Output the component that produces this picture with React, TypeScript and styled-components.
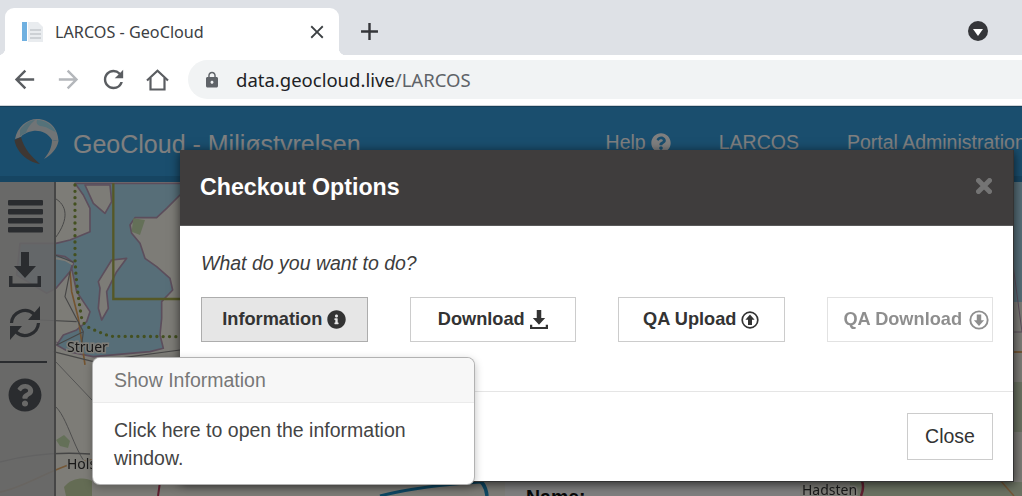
import React from "react";
import styled, { createGlobalStyle } from "styled-components";
import { FaInfoCircle, FaQuestionCircle } from "react-icons/fa";
import {
  MdAdd,
  MdArrowBack,
  MdArrowForward,
  MdClose,
  MdLock,
  MdRefresh,
} from "react-icons/md";

const GlobalStyle = createGlobalStyle`
  html, body {
    margin: 0;
    padding: 0;
    overflow: hidden;
    background: #fff;
  }
  * {
    box-sizing: border-box;
  }
`;

const Page = styled.div`
  width: 1022px;
  height: 496px;
  display: flex;
  flex-direction: column;
  font-family: "Liberation Sans", Arial, sans-serif;
  overflow: hidden;
`;

/* browser chrome */
const TabStrip = styled.div`
  height: 55px;
  flex: none;
  background: #dee1e6;
  display: flex;
  align-items: flex-end;
  padding-left: 5px;
  padding-right: 34px;
`;

const Tab = styled.div`
  position: relative;
  width: 334px;
  height: 47px;
  background: #fff;
  border-radius: 9px 9px 0 0;
  display: flex;
  align-items: center;
  padding: 0 11px 0 17px;
  gap: 11px;

  &::before,
  &::after {
    content: "";
    position: absolute;
    bottom: 0;
    width: 7px;
    height: 7px;
  }
  &::before {
    left: -7px;
    background: radial-gradient(circle at 0 0, transparent 7px, #fff 7.5px);
  }
  &::after {
    right: -7px;
    background: radial-gradient(circle at 100% 0, transparent 7px, #fff 7.5px);
  }
`;

const TabTitle = styled.span`
  flex: 1;
  font-family: "Noto Sans", sans-serif;
  font-size: 16.2px;
  color: #3c4043;
  white-space: nowrap;
`;

const NewTab = styled.div`
  margin-left: 16px;
  height: 47px;
  display: flex;
  align-items: center;
  color: #35363a;
`;

const ProfileDot = styled.div`
  margin-left: auto;
  margin-bottom: 14px;
  width: 20px;
  height: 20px;
  border-radius: 50%;
  background: #35363a;
  display: flex;
  align-items: center;
  justify-content: center;

  &::after {
    content: "";
    margin-top: 2px;
    border-left: 5px solid transparent;
    border-right: 5px solid transparent;
    border-top: 7px solid #fff;
  }
`;

const Toolbar = styled.div`
  height: 51px;
  flex: none;
  background: #fff;
  border-bottom: 1px solid #cfd3d8;
  display: flex;
  align-items: flex-start;
  padding: 5px 0 0 2px;
`;

const NavButton = styled.div<{ $faded?: boolean }>`
  width: 44.5px;
  height: 39px;
  display: flex;
  align-items: center;
  justify-content: center;
  color: ${(p) => (p.$faded ? "#b4b7bb" : "#5a5d61")};
`;

const Omnibox = styled.div`
  flex: 1;
  height: 39px;
  margin-left: 8px;
  background: #f1f3f4;
  border-radius: 20px 0 0 20px;
  display: flex;
  align-items: center;
  padding-left: 15px;
  gap: 15px;
  color: #5f6368;
`;

const UrlText = styled.span`
  font-family: "Noto Sans", sans-serif;
  font-size: 18.5px;
  color: #5f6368;
  white-space: nowrap;

  b {
    font-weight: 400;
    color: #202124;
  }
`;

/* the portal behind the dialog */
const AppArea = styled.div`
  position: relative;
  flex: 1;
  display: flex;
  flex-direction: column;
  overflow: hidden;
`;

const Header = styled.header`
  height: 76px;
  flex: none;
  background: #349cdc;
  border-top: 1px solid #2a7cb0;
  border-bottom: 6px solid #2d8ac4;
  display: flex;
  align-items: center;
  padding: 0 0 0 14px;
  color: #fff;
  overflow: hidden;
`;

const LogoMark = styled.svg`
  flex: none;
`;

const Brand = styled.div`
  font-size: 25px;
  margin-left: 13px;
  margin-top: 5px;
  white-space: nowrap;
`;

const HeaderNav = styled.nav`
  margin-left: 245px;
  margin-top: 2px;
  display: flex;
  align-items: center;
  gap: 48px;
  font-size: 19.5px;
  white-space: nowrap;
`;

const NavItem = styled.span`
  display: flex;
  align-items: center;
  gap: 5px;
`;

const Workspace = styled.div`
  position: relative;
  flex: 1;
  display: flex;
`;

const MapCanvas = styled.svg`
  position: absolute;
  inset: 0;
  filter: blur(0.7px);
`;

const MapLabel = styled.text`
  font-family: "Noto Sans", sans-serif;
  font-size: 14px;
  fill: #333;
  stroke: #fbf9ee;
  stroke-width: 3px;
  paint-order: stroke;
`;

const Sidebar = styled.aside`
  position: relative;
  width: 56px;
  background: rgba(205, 205, 205, 0.88);
  border-right: 2px solid #8c8c8c;
  padding-top: 17px;
  display: flex;
  flex-direction: column;
  color: #55585e;
`;

const SideButton = styled.div`
  width: 50px;
  height: 35px;
  margin-bottom: 18px;
  display: flex;
  align-items: center;
  justify-content: center;
`;

const SideDivider = styled.hr`
  width: 47px;
  height: 2px;
  margin: 3px 0 14px;
  border: 0;
  background: #55585e;
`;

const InfoPanel = styled.div`
  position: absolute;
  left: 505px;
  top: 299px;
  width: 295px;
  height: 40px;
  background: #fff;
  padding: 5px 0 0 21px;
  font-size: 19.5px;
  font-weight: 700;
  color: #111;
`;

/* dialog */
const Backdrop = styled.div`
  position: absolute;
  inset: 0;
  background: rgba(0, 0, 0, 0.5);
  padding: 44px 8px 0 180px;
`;

const Modal = styled.div`
  background: #fff;
  box-shadow: 0 2px 10px rgba(0, 0, 0, 0.65);
  border-right: 1px solid #333;
  border-bottom: 1px solid #333;
`;

const ModalHeader = styled.div`
  height: 76px;
  background: #3f3d3d;
  border-bottom: 1px solid #5a5a5a;
  display: flex;
  align-items: center;
  justify-content: space-between;
  padding: 0 21px 0 20px;
`;

const ModalTitle = styled.h4`
  margin: 0;
  font-size: 23.2px;
  font-weight: 700;
  color: #fff;
`;

const DismissIcon = styled.svg`
  margin-bottom: 4px;
  color: #747474;
`;

const ModalBody = styled.div`
  height: 165px;
  padding: 26px 20px 0 21px;
`;

const Prompt = styled.p`
  margin: 0 0 22px;
  font-size: 19.5px;
  line-height: 23px;
  font-style: italic;
  color: #3c3c3c;
`;

const ActionRow = styled.div`
  display: grid;
  grid-template-columns: repeat(4, 1fr);
  gap: 42px;
`;

const ActionButton = styled.button<{ $active?: boolean }>`
  height: 45px;
  padding: 0;
  display: flex;
  align-items: center;
  justify-content: center;
  gap: 5px;
  font-family: inherit;
  font-size: 18.2px;
  font-weight: 700;
  color: #333;
  background: ${(p) => (p.$active ? "#e6e6e6" : "#fff")};
  border: 1.5px solid ${(p) => (p.$active ? "#adadad" : "#ccc")};

  &:disabled {
    opacity: 0.55;
    padding-left: 13px;
    gap: 7px;
    color: #333;
  }
`;

const ModalFooter = styled.div`
  height: 90px;
  border-top: 1px solid #e5e5e5;
  display: flex;
  align-items: flex-start;
  justify-content: flex-end;
  padding: 21px 20px 0 0;
`;

const CloseButton = styled.button`
  width: 86px;
  height: 47px;
  padding: 0;
  font-family: inherit;
  font-size: 19.5px;
  color: #333;
  background: #fff;
  border: 1px solid #ccc;
`;

const Popover = styled.div`
  position: absolute;
  left: 92px;
  top: 251px;
  width: 383px;
  height: 128px;
  background: #fff;
  border: 1px solid rgba(0, 0, 0, 0.3);
  border-radius: 8px;
  box-shadow: 0 3px 8px rgba(0, 0, 0, 0.25);
  overflow: hidden;
  font-size: 19.5px;
`;

const PopoverTitle = styled.div`
  height: 45px;
  background: #f7f7f7;
  border-bottom: 1px solid #ebebeb;
  padding: 0 21px;
  display: flex;
  align-items: center;
  color: #777;
`;

const PopoverText = styled.div`
  padding: 13px 21px 0;
  line-height: 28px;
  color: #444;
`;

function Favicon() {
  return (
    <svg width="22" height="22" viewBox="0 0 22 22">
      <rect x="0" y="1" width="5" height="19" fill="#6fb0e0" />
      <path d="M6 1h10l5 5v15H6z" fill="#e9ecef" />
      <path d="M8 9h11M8 13h11M8 17h11" stroke="#c3c8cd" strokeWidth="1.4" />
    </svg>
  );
}

function HomeIcon() {
  return (
    <svg width="23" height="22" viewBox="0 0 23 22" fill="none" stroke="currentColor" strokeWidth="2.2">
      <path d="M1 11.5 11.5 1.8 22 11.5" />
      <path d="M4.5 9v11.5h14V9" />
    </svg>
  );
}

function GeoLogo() {
  return (
    <LogoMark width="46" height="46" viewBox="14 120 46 46">
      <path
        d="M15 140C17 128 27 120 37 120C50 120 58 130 58.5 142L52 141C48 134 40 131 33 132C27 133 22 136 21 138Z"
        fill="#e0e8ec"
      />
      <path
        d="M37 121C46 121 52 126 56 133C50 131 46 127 40 127C37 126 36 124 37 121Z"
        fill="#a8e4f4"
      />
      <path
        d="M20 131C24 125 30 121 35 121C30 125 27 130 26 134C23 135 21 136 20 138Z"
        fill="#a8dcec"
      />
      <path d="M14.5 141C16 152 27 163 40 165C32 158 24 150 21 138Z" fill="#7c6e66" />
      <path d="M44 160C51 156 57 150 58.5 142L52 141C52 148 49 154 44 160Z" fill="#e0e4e4" />
    </LogoMark>
  );
}

function BarsIcon() {
  return (
    <svg width="35" height="33" viewBox="0 0 35 33" fill="currentColor">
      <rect y="0" width="35" height="5.5" rx="1" />
      <rect y="9" width="35" height="5.5" rx="1" />
      <rect y="18" width="35" height="5.5" rx="1" />
      <rect y="27" width="35" height="5.5" rx="1" />
    </svg>
  );
}

function TrayDownIcon({ size, heavy }: { size: number; heavy?: boolean }) {
  return (
    <svg width={size} height={(size * 35) / 32} viewBox="0 0 32 35" fill="currentColor">
      <path d="M12 0h8v14h7L16 26 5 14h7z" />
      <path d={heavy ? "M0 26h4v4h24v-4h4v9H0z" : "M0 24h3.5v7.5h25V24H32v11H0z"} />
    </svg>
  );
}

function RefreshIcon() {
  return (
    <svg width="32" height="34" viewBox="0 0 32 34" fill="none" stroke="currentColor">
      <path d="M2.5 17A13.5 13.5 0 0 1 25 8" strokeWidth="3.2" />
      <path d="M29.5 17A13.5 13.5 0 0 1 7 26" strokeWidth="3.2" />
      <path d="M31 0v14H19z" fill="currentColor" stroke="none" />
      <path d="M1 34V20h12z" fill="currentColor" stroke="none" />
    </svg>
  );
}

function CircleArrowIcon({ up, size }: { up?: boolean; size: number }) {
  return (
    <svg width={size} height={size} viewBox="0 0 18 18">
      <circle cx="9" cy="9" r="7.8" fill="none" stroke="currentColor" strokeWidth="1.7" />
      <path
        d={up ? "M9 3.6 13.6 8.8H11V14H7V8.8H4.4Z" : "M9 14.4 13.6 9.2H11V4H7V9.2H4.4Z"}
        fill="currentColor"
      />
    </svg>
  );
}

function MapDrawing() {
  return (
    <MapCanvas width="1022" height="314" viewBox="0 0 1022 314">
      <rect width="1022" height="314" fill="#fbf9ee" />
      <rect x="1014" width="8" height="120" fill="#aedcf0" />
      <path d="M1000 150h22M1010 60l12 90" stroke="#b89cb8" strokeWidth="1" fill="none" />
      <path d="M1014 170h8" stroke="#e8b070" strokeWidth="2" />
      <path d="M1014 200h8v50h-8zM850 300h172v14H850z" fill="#d6e4c4" />
      <path d="M1000 298l14 16" stroke="#e8b070" strokeWidth="1.5" fill="none" />
      <path d="M862 299c2 5 1 10-1 15" stroke="#c04060" strokeWidth="2.5" fill="none" />
      <path d="M160 300l-2 14" stroke="#c04060" strokeWidth="2" fill="none" />
      <path d="M474 296c8 2 12 8 13 18" stroke="#1c90c8" strokeWidth="3.5" fill="none" />
      <path d="M380 314c30-8 70-12 100-14" stroke="#1c90c8" strokeWidth="3" fill="none" />
      <path d="M56 225c14 14 20 55 40 66" stroke="#9a9a9a" strokeWidth="1" fill="none" />
      <path d="M0 280c30-8 60-10 90-8" stroke="#8a8a8a" strokeWidth="1.4" fill="none" />
      <path d="M0 310c26-4 60-30 92-32" stroke="#e8b070" strokeWidth="1.8" fill="none" />
      <path d="M56 160l34 12M56 180l36 38" stroke="#a8a8a8" strokeWidth="1" fill="none" />
      <path d="M56 258l4 6 8 2 2-7-6-6z" fill="#c8e0b0" />
      <path d="M64 305c8-10 22-10 28-6v15H66z" fill="#c8d8a8" />
      <g transform="translate(50 -7) scale(.3333)">
        <path
          d="M75 25H1000V60H390L350 100 320 128 255 128 240 150 245 175 270 205 285 250 320 275 360 310 368 345 335 380 335 430 330 480 340 520 300 530 130 545 55 530 20 510 40 480 80 465 110 440 120 410 80 350 65 280 70 262 60 290 18 340 -10 355 -100 300 -90 205 18 205 60 195 120 170 120 100 100 60Z"
          fill="#aedcf0"
          stroke="#b89cb8"
          strokeWidth="5"
          strokeLinejoin="round"
        />
        <rect x="390" y="60" width="300" height="600" fill="#fbf9ee" />
        <path
          d="M105 30 180 30 185 80 165 115 130 85Z"
          fill="#fbf9ee"
          stroke="#b89cb8"
          strokeWidth="5"
          strokeLinejoin="round"
        />
        <path
          d="M185 255 230 250 200 290 170 350 175 400 155 435 145 400 150 340 145 320Z"
          fill="#fbf9ee"
          stroke="#b89cb8"
          strokeWidth="5"
          strokeLinejoin="round"
        />
        <path d="M18 240 45 245 70 262 65 280" fill="none" stroke="#b89cb8" strokeWidth="5" />
        <path d="M18 250 45 255 68 268" fill="none" stroke="#fbf9ee" strokeWidth="6" />
        <path d="M250 130 285 135 270 180 245 170Z" fill="#c8e0b0" />
        <path d="M60 290 65 350 85 430 105 570" fill="none" stroke="#e8a860" strokeWidth="5" />
        <path
          d="M15 240 70 262M60 290 45 365 100 470 95 510M20 510 100 470M-30 435 80 440M10 530 130 560 390 525"
          fill="none"
          stroke="#8e8e8e"
          strokeWidth="3.5"
        />
        <path d="M15 70C50 90 60 130 15 190" fill="none" stroke="#8e8e8e" strokeWidth="3" />
        <path
          d="M75 30V250Q78 330 95 430 100 450 125 462L180 484 390 485"
          fill="none"
          stroke="#87a040"
          strokeWidth="10"
          strokeLinecap="round"
          strokeDasharray="0 19"
        />
        <path d="M190 25V372H1000" fill="none" stroke="#aab04c" strokeWidth="7" />
      </g>
      <MapLabel x="67" y="170">Struer</MapLabel>
      <MapLabel x="67" y="287">Holstebro</MapLabel>
      <MapLabel x="802" y="313">Hadsten</MapLabel>
    </MapCanvas>
  );
}

export default function App() {
  return (
    <Page>
      <GlobalStyle />
      <TabStrip>
        <Tab>
          <Favicon />
          <TabTitle>LARCOS - GeoCloud</TabTitle>
          <MdClose size={22} color="#3c4043" />
        </Tab>
        <NewTab>
          <MdAdd size={29} />
        </NewTab>
        <ProfileDot />
      </TabStrip>
      <Toolbar>
        <NavButton>
          <MdArrowBack size={29} />
        </NavButton>
        <NavButton $faded>
          <MdArrowForward size={29} />
        </NavButton>
        <NavButton>
          <MdRefresh size={29} />
        </NavButton>
        <NavButton>
          <HomeIcon />
        </NavButton>
        <Omnibox>
          <MdLock size={18} />
          <UrlText>
            <b>data.geocloud.live</b>/LARCOS
          </UrlText>
        </Omnibox>
      </Toolbar>
      <AppArea>
        <Header>
          <GeoLogo />
          <Brand>GeoCloud - Miljøstyrelsen</Brand>
          <HeaderNav>
            <NavItem>
              Help <FaQuestionCircle size={20} />
            </NavItem>
            <NavItem>LARCOS</NavItem>
            <NavItem>Portal Administration</NavItem>
          </HeaderNav>
        </Header>
        <Workspace>
          <MapDrawing />
          <Sidebar>
            <SideButton>
              <BarsIcon />
            </SideButton>
            <SideButton>
              <TrayDownIcon size={32} />
            </SideButton>
            <SideButton>
              <RefreshIcon />
            </SideButton>
            <SideDivider />
            <SideButton>
              <FaQuestionCircle size={34} />
            </SideButton>
          </Sidebar>
          <InfoPanel>Name:</InfoPanel>
        </Workspace>
        <Backdrop>
          <Modal>
            <ModalHeader>
              <ModalTitle>Checkout Options</ModalTitle>
              <DismissIcon width="16" height="16" viewBox="0 0 16 16">
                <path d="M2.5 2.5 13.5 13.5M13.5 2.5 2.5 13.5" stroke="currentColor" strokeWidth="5" strokeLinecap="round" />
              </DismissIcon>
            </ModalHeader>
            <ModalBody>
              <Prompt>What do you want to do?</Prompt>
              <ActionRow>
                <ActionButton $active>
                  Information <FaInfoCircle size={19} />
                </ActionButton>
                <ActionButton>
                  Download <TrayDownIcon size={18} heavy />
                </ActionButton>
                <ActionButton>
                  QA Upload <CircleArrowIcon up size={18} />
                </ActionButton>
                <ActionButton disabled>
                  QA Download <CircleArrowIcon size={20} />
                </ActionButton>
              </ActionRow>
            </ModalBody>
            <ModalFooter>
              <CloseButton>Close</CloseButton>
            </ModalFooter>
          </Modal>
          <Popover>
            <PopoverTitle>Show Information</PopoverTitle>
            <PopoverText>Click here to open the information window.</PopoverText>
          </Popover>
        </Backdrop>
      </AppArea>
    </Page>
  );
}
